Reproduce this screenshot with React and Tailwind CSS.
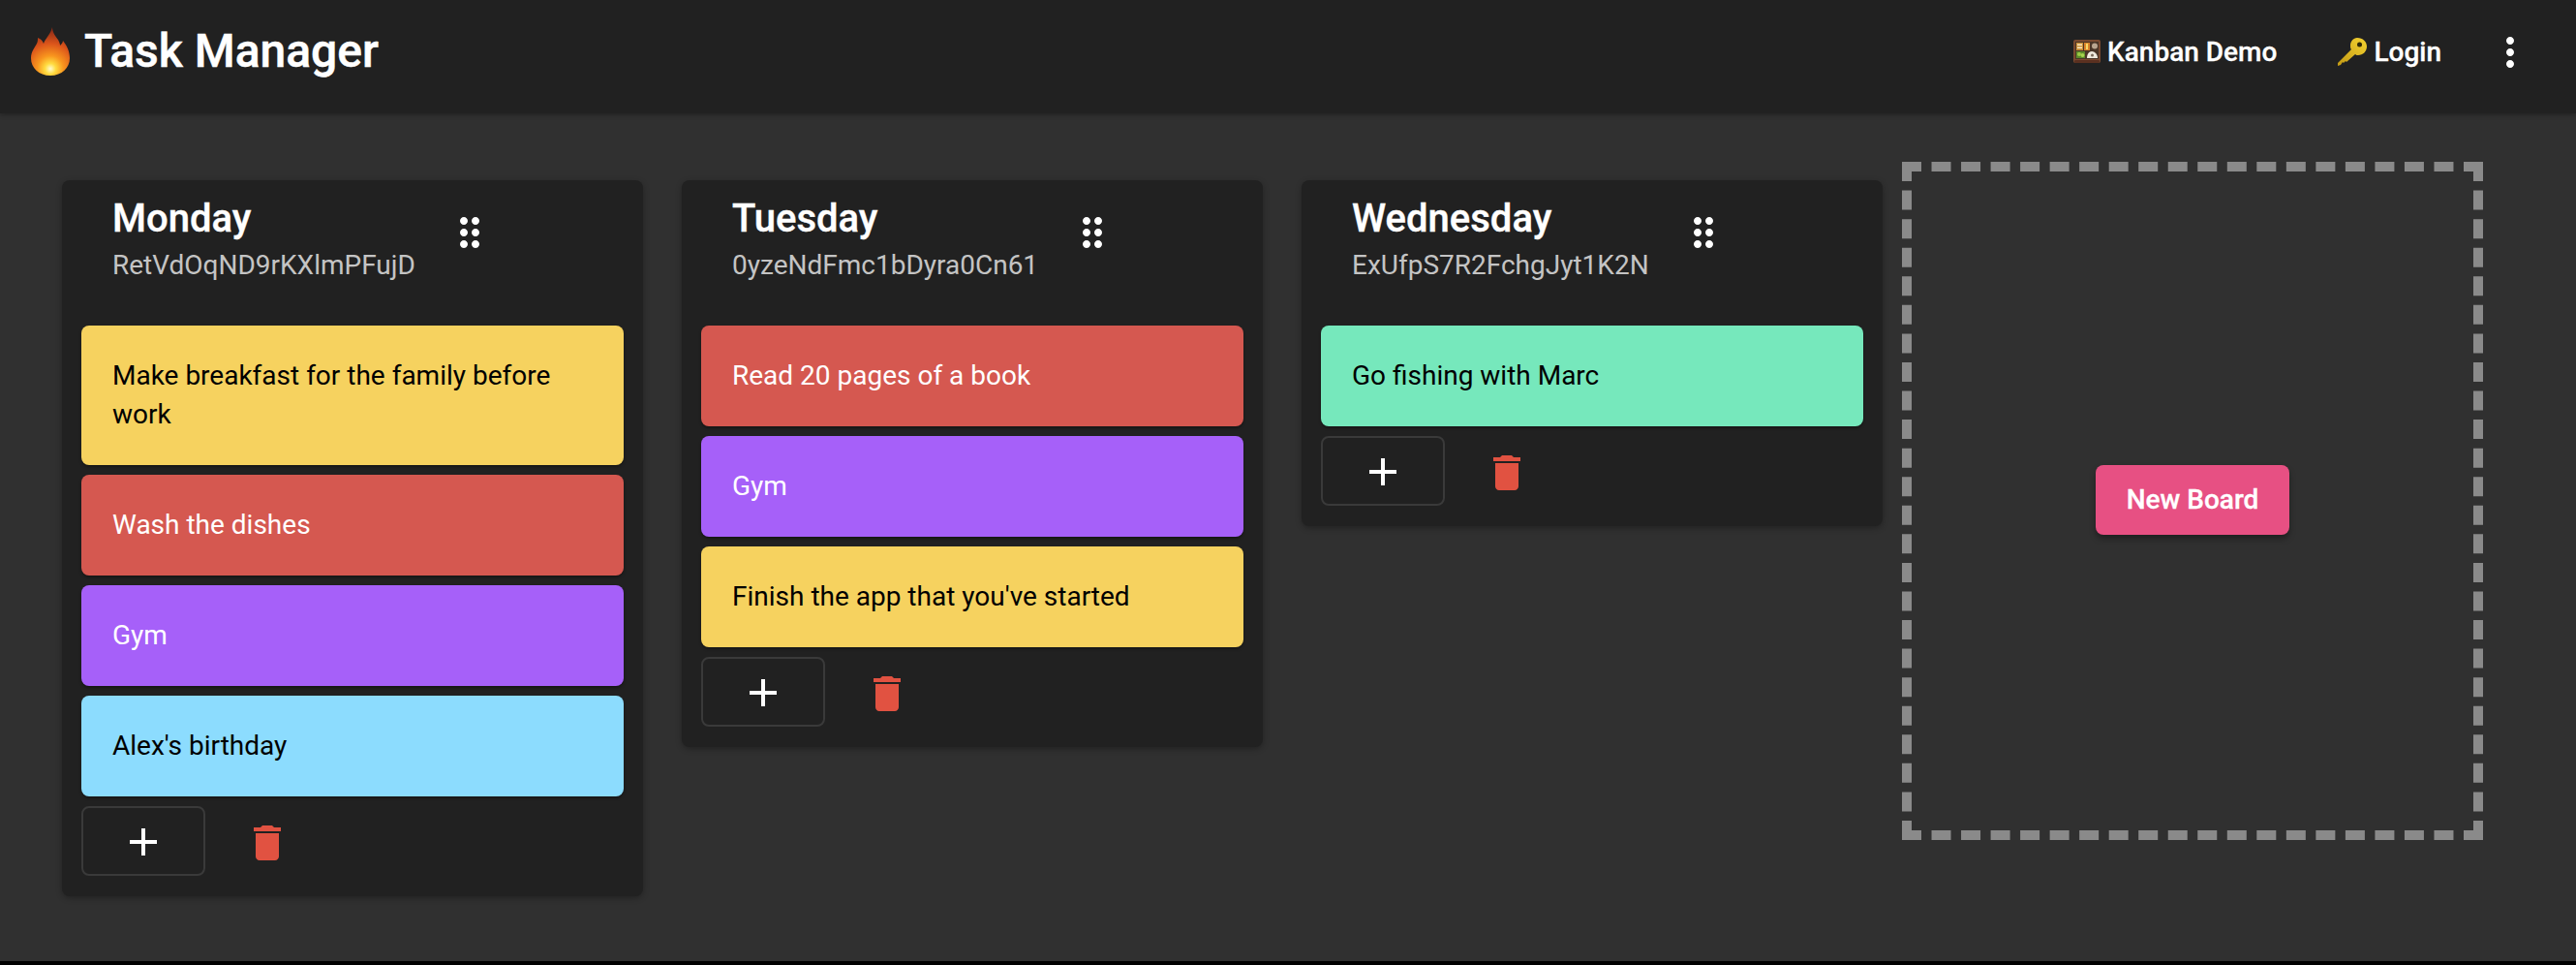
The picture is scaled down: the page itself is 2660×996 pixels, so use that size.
import React from "react";

const roboto = { fontFamily: "Roboto, sans-serif" };

const boards = [
  {
    name: "Monday",
    id: "RetVdOqND9rKXlmPFujD",
    tasks: [
      { text: "Make breakfast for the family before work", color: "bg-[#f6d25f] text-black" },
      { text: "Wash the dishes", color: "bg-[#d55850] text-white" },
      { text: "Gym", color: "bg-[#a660f9] text-white" },
      { text: "Alex's birthday", color: "bg-[#8cdcfe] text-black" },
    ],
  },
  {
    name: "Tuesday",
    id: "0yzeNdFmc1bDyra0Cn61",
    tasks: [
      { text: "Read 20 pages of a book", color: "bg-[#d55850] text-white" },
      { text: "Gym", color: "bg-[#a660f9] text-white" },
      { text: "Finish the app that you've started", color: "bg-[#f6d25f] text-black" },
    ],
  },
  {
    name: "Wednesday",
    id: "ExUfpS7R2FchgJyt1K2N",
    tasks: [{ text: "Go fishing with Marc", color: "bg-[#76e8bc] text-black" }],
  },
];

// material icons, 24 unit box
const Icon = ({ d, className }) => (
  <svg viewBox="0 0 24 24" className={className} fill="currentColor">
    <path d={d} />
  </svg>
);

const DRAG =
  "M11 18c0 1.1-.9 2-2 2s-2-.9-2-2 .9-2 2-2 2 .9 2 2zm-2-8c-1.1 0-2 .9-2 2s.9 2 2 2 2-.9 2-2-.9-2-2-2zm0-6c-1.1 0-2 .9-2 2s.9 2 2 2 2-.9 2-2-.9-2-2-2zm6 4c1.1 0 2-.9 2-2s-.9-2-2-2-2 .9-2 2 .9 2 2 2zm0 2c-1.1 0-2 .9-2 2s.9 2 2 2 2-.9 2-2-.9-2-2-2zm0 6c-1.1 0-2 .9-2 2s.9 2 2 2 2-.9 2-2-.9-2-2-2z";
const ADD = "M19 13h-6v6h-2v-6H5v-2h6V5h2v6h6v2z";
const TRASH = "M6 19c0 1.1.9 2 2 2h8c1.1 0 2-.9 2-2V7H6v12zM19 4h-3.5l-1-1h-5l-1 1H5v2h14V4z";
const MORE =
  "M12 8c1.1 0 2-.9 2-2s-.9-2-2-2-2 .9-2 2 .9 2 2 2zm0 2c-1.1 0-2 .9-2 2s.9 2 2 2 2-.9 2-2-.9-2-2-2zm0 6c-1.1 0-2 .9-2 2s.9 2 2 2 2-.9 2-2-.9-2-2-2z";

const Flame = () => (
  <svg viewBox="0 0 40 50" className="w-[40px] h-[50px] shrink-0">
    <defs>
      <radialGradient id="fl" gradientUnits="userSpaceOnUse" cx="20" cy="43" r="40">
        <stop offset="0" stopColor="#fffbd0" />
        <stop offset="0.14" stopColor="#ffdc40" />
        <stop offset="0.34" stopColor="#f8951e" />
        <stop offset="0.65" stopColor="#dc551b" />
        <stop offset="1" stopColor="#8f2c16" />
      </radialGradient>
    </defs>
    <path
      d="M22 0c0 5 3 9 6 13 1 2 2 4 2 6 1-1 3-3 3-5 4 5 7 11 7 18 0 10-8 18-20 18S0 42 0 32c0-7 4-11 6-15 1-2 1-4 1-6 3 1 5 3 6 6 1-3 2-4 4-7 2-3 4-6 5-10z"
      fill="url(#fl)"
    />
  </svg>
);

const Bento = () => (
  <svg viewBox="0 0 28 26" className="w-[28px] h-[26px] shrink-0">
    <rect x="0" y="0" width="28" height="24" rx="2" fill="#7a4a30" />
    <rect x="2" y="2" width="24" height="18" fill="#4a3526" />
    <rect x="3" y="3" width="7" height="8" fill="#c98f3a" />
    <rect x="4" y="4.500" width="5" height="1.500" fill="#fbe9c0" />
    <rect x="4" y="7.500" width="5" height="1.500" fill="#fbe9c0" />
    <rect x="11" y="3" width="6" height="8" fill="#d9822b" />
    <rect x="13" y="4" width="2" height="6" fill="#f8d867" />
    <circle cx="22" cy="6.500" r="3" fill="#b9a58f" />
    <rect x="3" y="12" width="9" height="7" fill="#5b8a2a" />
    <circle cx="6" cy="15" r="2" fill="#9ccb45" />
    <circle cx="9.500" cy="16" r="2" fill="#a8d24e" />
    <path d="M14 19c0-4 2-7 5-7s6 3 6 7z" fill="#efe9dc" />
    <circle cx="19.500" cy="16" r="1.500" fill="#7a6a58" />
    <rect x="1" y="21" width="26" height="3" rx="1" fill="#5a3020" />
  </svg>
);

const Key = () => (
  <svg viewBox="0 0 30 30" className="w-[30px] h-[30px] shrink-0">
    <defs>
      <linearGradient id="ky" x1="0" y1="1" x2="1" y2="0">
        <stop offset="0" stopColor="#c39a14" />
        <stop offset="1" stopColor="#f4d230" />
      </linearGradient>
    </defs>
    <path
      d="M20 0c6 0 10 4 10 9s-4 9-9 9c-1 0-2 0-3-1L9 25l-1-1-2 2-1-1-2 3-3 1v-3L14 12c-1-1-1-2-1-4 0-4 3-8 7-8z"
      fill="url(#ky)"
    />
    <circle cx="22.500" cy="7" r="2.500" fill="#2e2808" />
  </svg>
);

const Board = ({ board }) => (
  <div className="w-[600px] mt-[19px] shrink-0 rounded-[8px] bg-[#212121] shadow-[0_2px_6px_rgba(0,0,0,0.3)] px-[20px] pb-[21px]">
    <div className="flex items-start pl-[32px] pt-[16px] h-[150px]">
      <div>
        <div className="text-[40px] leading-[48px] font-medium text-white [-webkit-text-stroke:0.4px]">{board.name}</div>
        <div className="text-[28px] leading-[40px] mt-[4px] text-[#c4c4c4]">{board.id}</div>
      </div>
      <Icon d={DRAG} className="w-[48px] h-[48px] ml-[32px] mt-[14px] text-white" />
    </div>
    <div className="flex flex-col gap-[10px]">
      {board.tasks.map((task, i) => (
        <div
          key={i}
          className={`rounded-[8px] px-[32px] py-[32px] text-[28px] leading-[40px] shadow-[0_2px_3px_rgba(0,0,0,0.35)] ${task.color}`}
        >
          {task.text}
        </div>
      ))}
    </div>
    <div className="flex items-center mt-[10px]">
      <button className="w-[128px] h-[72px] flex items-center justify-center rounded-[8px] border-2 border-[#3a3a3a] text-white">
        <Icon d={ADD} className="w-[48px] h-[48px] mt-[2px]" />
      </button>
      <Icon d={TRASH} className="w-[48px] h-[48px] ml-[40px] mt-[4px] text-[#e15241]" />
    </div>
  </div>
);

export default function App() {
  return (
    <div className="h-[996px] bg-black overflow-hidden" style={roboto}>
      <div className="h-[992px] bg-[#303030]">
        <header className="h-[117px] bg-[#212121] shadow-[0_2px_4px_rgba(0,0,0,0.25)] flex items-center text-white pl-[32px] pr-[44px]">
          <div className="flex items-center gap-[15px] -mt-[12px]">
            <Flame />
            <span className="text-[48px] font-medium leading-none [-webkit-text-stroke:0.5px]">Task Manager</span>
          </div>
          <div className="ml-auto flex items-center -mt-[10px]">
            <Bento />
            <span className="text-[28px] font-medium ml-[7px] [-webkit-text-stroke:0.3px]">Kanban Demo</span>
            <div className="ml-[63px]">
              <Key />
            </div>
            <span className="text-[28px] font-medium ml-[7px] [-webkit-text-stroke:0.3px]">Login</span>
            <Icon d={MORE} className="w-[48px] h-[48px] ml-[47px]" />
          </div>
        </header>
        <main className="flex items-start pl-[64px] pt-[50px] gap-[40px]">
          {boards.map((b) => (
            <Board key={b.name} board={b} />
          ))}
          <div className="w-[600px] h-[700px] -ml-[20px] shrink-0 border-[10px] border-dashed border-[#8a8a8a] flex items-center justify-center">
            <button className="w-[200px] h-[72px] -mt-[2px] rounded-[8px] bg-[#e75083] text-white text-[28px] font-medium shadow-[0_4px_6px_rgba(0,0,0,0.35)] [-webkit-text-stroke:0.3px]">
              New Board
            </button>
          </div>
        </main>
      </div>
    </div>
  );
}
